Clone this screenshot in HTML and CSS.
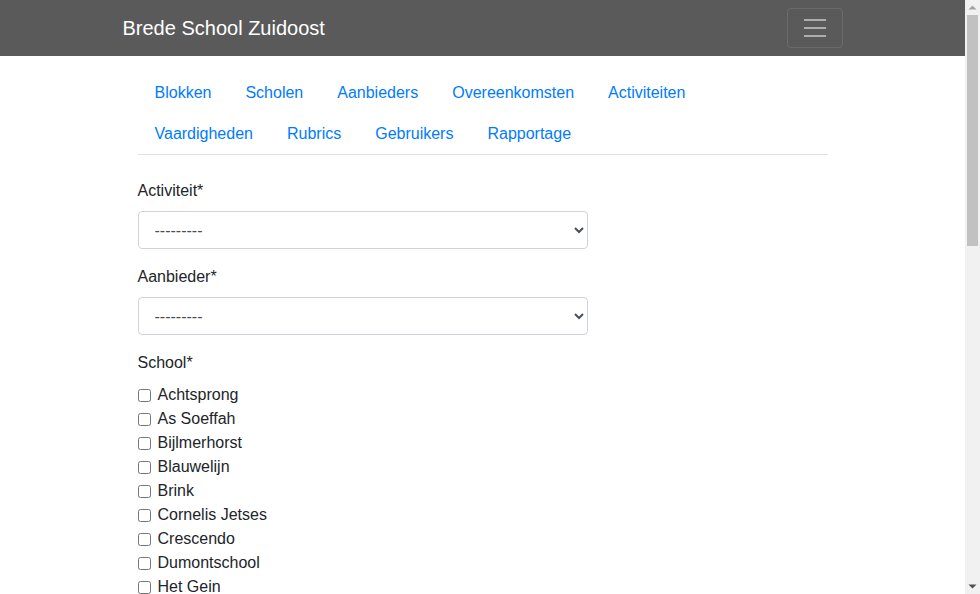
FILE: index.html
```html
<!DOCTYPE html>
<html lang="nl">
<head>
<meta charset="utf-8">
<title>Brede School Zuidoost</title>
<link rel="stylesheet" href="styles.css">
</head>
<body>
<div class="viewport">
  <nav class="navbar">
    <div class="navbar-inner">
      <a class="brand" href="#">Brede School Zuidoost</a>
      <button class="toggler" type="button" aria-label="Menu">
        <svg class="toggler-icon" viewBox="0 0 30 30" width="30" height="30"><path stroke="rgba(255,255,255,0.5)" stroke-width="2" d="M4 7h22M4 15h22M4 23h22"/></svg>
      </button>
    </div>
  </nav>
  <main class="container">
    <ul class="nav">
      <li class="nav-item"><a class="nav-link" href="#">Blokken</a></li>
      <li class="nav-item"><a class="nav-link" href="#">Scholen</a></li>
      <li class="nav-item"><a class="nav-link" href="#">Aanbieders</a></li>
      <li class="nav-item"><a class="nav-link" href="#">Overeenkomsten</a></li>
      <li class="nav-item"><a class="nav-link" href="#">Activiteiten</a></li>
      <li class="nav-item"><a class="nav-link" href="#">Vaardigheden</a></li>
      <li class="nav-item"><a class="nav-link" href="#">Rubrics</a></li>
      <li class="nav-item"><a class="nav-link" href="#">Gebruikers</a></li>
      <li class="nav-item"><a class="nav-link" href="#">Rapportage</a></li>
    </ul>
    <form class="form">
      <div class="form-group">
        <label class="label" for="activiteit">Activiteit*</label>
        <select class="form-control" id="activiteit"><option>---------</option></select>
      </div>
      <div class="form-group">
        <label class="label" for="aanbieder">Aanbieder*</label>
        <select class="form-control" id="aanbieder"><option>---------</option></select>
      </div>
      <div class="form-group">
        <div class="label">School*</div>
        <label class="check"><input type="checkbox"><span>Achtsprong</span></label>
        <label class="check"><input type="checkbox"><span>As Soeffah</span></label>
        <label class="check"><input type="checkbox"><span>Bijlmerhorst</span></label>
        <label class="check"><input type="checkbox"><span>Blauwelijn</span></label>
        <label class="check"><input type="checkbox"><span>Brink</span></label>
        <label class="check"><input type="checkbox"><span>Cornelis Jetses</span></label>
        <label class="check"><input type="checkbox"><span>Crescendo</span></label>
        <label class="check"><input type="checkbox"><span>Dumontschool</span></label>
        <label class="check"><input type="checkbox"><span>Het Gein</span></label>
      </div>
    </form>
  </main>
</div>
<div class="scrollbar" aria-hidden="true">
  <div class="sb-button"><svg viewBox="0 0 15 15" width="15" height="15"><path d="M3.5 9.5 7.5 5.5 11.5 9.5Z" fill="#a3a3a3"/></svg></div>
  <div class="sb-thumb"></div>
  <div class="sb-track"></div>
  <div class="sb-button"><svg viewBox="0 0 15 15" width="15" height="15"><path d="M3.5 5.5 7.5 9.5 11.5 5.5Z" fill="#505050"/></svg></div>
</div>
</body>
</html>
```
FILE: styles.css
```css
html, body {
  margin: 0;
  padding: 0;
  height: 100%;
  overflow: hidden;
}
body {
  display: flex;
  font-family: "Liberation Sans", Arial, sans-serif;
  font-size: 16px;
  line-height: 1.5;
  color: #212529;
  background: #fff;
}
.viewport {
  flex: 1;
  min-width: 0;
  height: 100%;
  overflow: hidden;
}
.scrollbar {
  width: 15px;
  flex: none;
  height: 100%;
  background: #f1f1f1;
  display: flex;
  flex-direction: column;
}
.sb-button {
  height: 15px;
  flex: none;
}
.sb-button svg {
  display: block;
}
.sb-thumb {
  height: 231px;
  margin: 0 2px;
  background: #c1c1c1;
  flex: none;
}
.sb-track {
  flex: 1;
}
.navbar {
  background: #5a5a5a;
  padding: 8px 16px;
}
.navbar-inner {
  max-width: 720px;
  margin: 0 auto;
  display: flex;
  align-items: center;
  justify-content: space-between;
}
.brand {
  color: #fff;
  font-size: 20px;
  line-height: 30px;
  padding: 5px 0;
  text-decoration: none;
}
.toggler {
  display: flex;
  align-items: center;
  justify-content: center;
  width: 56px;
  height: 40px;
  padding: 4px 12px;
  background: transparent;
  border: 1px solid rgba(255,255,255,0.1);
  border-radius: 4px;
  box-sizing: border-box;
}
.toggler-icon {
  display: block;
}
.container {
  box-sizing: border-box;
  max-width: 720px;
  margin: 0 auto;
  padding: 0 15px;
}
.nav {
  list-style: none;
  margin: 16px 0 0;
  padding: 0;
  display: flex;
  flex-wrap: wrap;
  border-bottom: 1px solid #dee2e6;
}
.nav-item {
  margin-bottom: -1px;
}
.nav-link {
  display: block;
  padding: 8px 16px;
  border: 1px solid transparent;
  border-radius: 4px 4px 0 0;
  color: #007bff;
  text-decoration: none;
}
.form {
  margin-top: 24px;
}
.form-group {
  margin-bottom: 16px;
}
.label {
  display: block;
  margin-bottom: 8px;
}
.form-control {
  display: block;
  box-sizing: border-box;
  width: 450px;
  height: 38px;
  padding: 6px 12px;
  font-family: inherit;
  font-size: 16px;
  line-height: 1.5;
  color: #495057;
  background: #fff;
  border: 1px solid #ced4da;
  border-radius: 4px;
}
.check {
  display: flex;
  align-items: center;
  height: 24px;
}
.check input {
  width: 13px;
  height: 13px;
  margin: 0 7px 0 0;
}
```
